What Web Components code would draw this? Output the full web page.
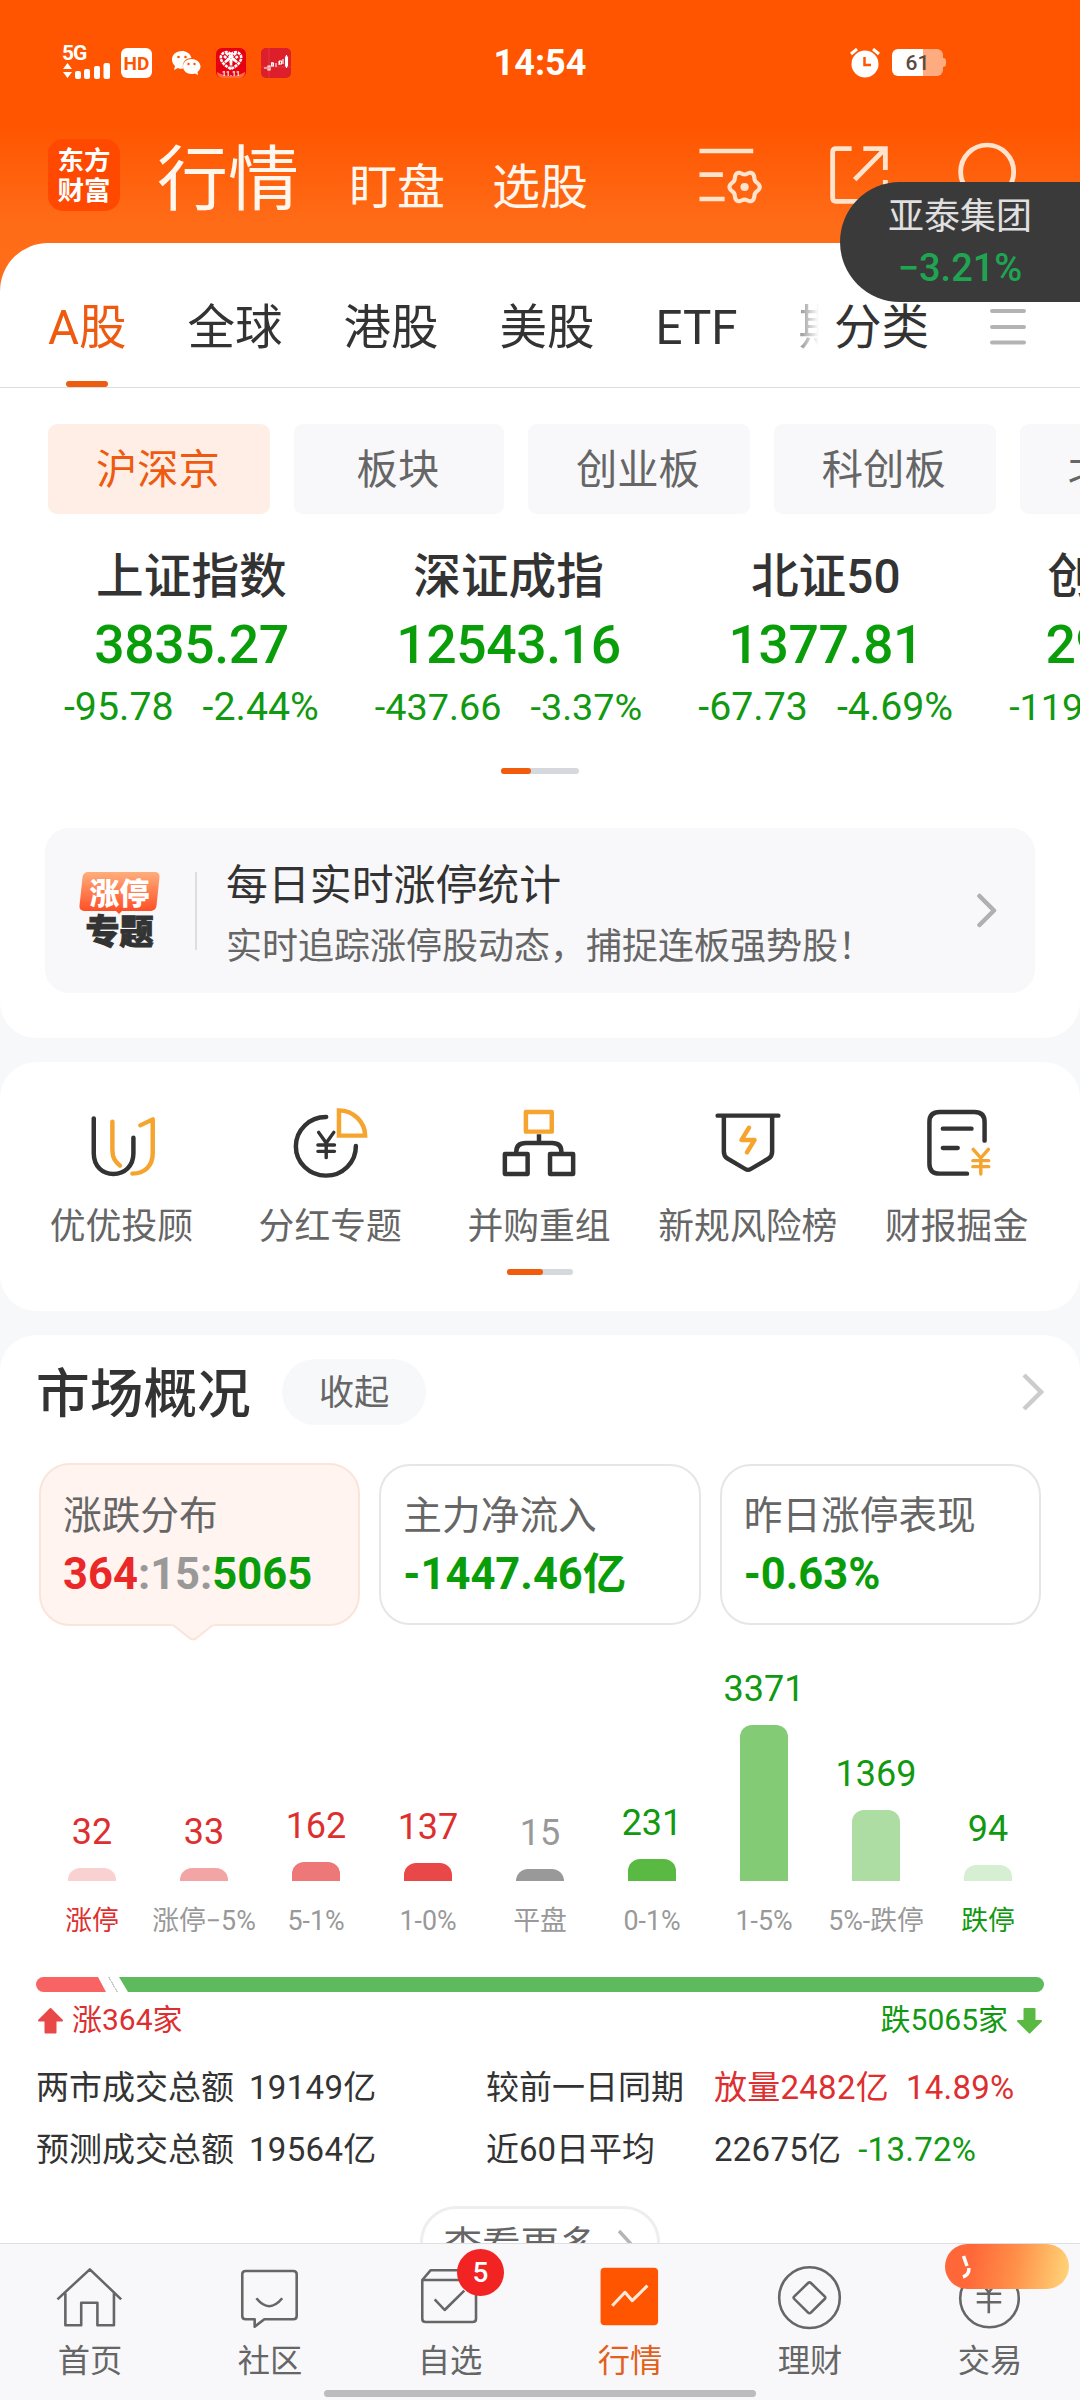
<!DOCTYPE html>
<html lang="zh-CN">
<head>
<meta charset="utf-8">
<title>行情</title>
<style>
    html, body { margin: 0; height: 2400px; }
    body {
        width: 1080px;
        overflow: hidden;
        font-family: Roboto, "Noto Sans CJK SC", sans-serif;
        color: #333;
        --up: #dd2f2f;
        --down: #119911;
        --brand: #ee5a10;
    }
</style>
</head>
<body>
<market-app></market-app>

<script>
// Base class: puts the markup returned by render() in an open shadow root
class BaseElement extends HTMLElement {
    constructor() {
        super();
        this.attachShadow({ mode: 'open' });
    }

    connectedCallback() {
        if (this._initialized) return;
        this._initialized = true;
        this.shadowRoot.innerHTML = this.render();
    }

    attr(name, fallback = '') {
        return this.getAttribute(name) || fallback;
    }
}

// Closed wavy outline with six lobes, used by the settings icon
function gearPath(cx, cy, radius, depth) {
    const points = [];
    for (let i = 0; i < 72; i++) {
        const angle = i * Math.PI / 36;
        const r = radius + depth * Math.cos(6 * angle);
        points.push(`${(cx + r * Math.cos(angle)).toFixed(1)} ${(cy + 1.08 * r * Math.sin(angle)).toFixed(1)}`);
    }
    return `M${points.join('L')}Z`;
}

const ICONS = {
    // header, 209x216
    settings: `<path d="M13 36H169M13 107H81M13 180H86"/><path stroke-width="12" d="${gearPath(144, 144, 39.500, 4.500)}"/><circle cx="144" cy="144" r="12" fill="currentColor" stroke="none"/>`,
    share: '<path d="M83 29H38Q28 29 28 39V177Q28 187 38 187H171Q181 187 181 177V123M117 29H181V93M181 29L92 122"/>',
    search: '<ellipse cx="105" cy="98" rx="77" ry="80"/><path d="M160 158L190 190"/>',
    // tools, 232x240
    youyou: '<path d="M37 40V145C37 184 62 207 94 207S152 184 152 145V98"/><path class="y" d="M91 50V135C91 160 100 171 113 182M172 61L208 43V145C208 184 184 205 149 206"/>',
    dividend: '<path d="M105 36A87 88 0 1 0 191 123"/><path class="y" stroke-linejoin="miter" d="M142 16A77 77 0 0 1 218 92H142Z"/><path stroke-width="10" d="M83 82L105 114L127 82M105 114V158M81 120H129M81 139H129"/>',
    merge: '<rect class="y" x="78" y="21" width="75" height="59"/><path d="M116 88V114M50 141Q50 114 78 114H154Q181 114 181 141" stroke-linecap="butt"/><rect x="17" y="147" width="66" height="60"/><rect x="148" y="147" width="67" height="60"/>',
    risk: '<path d="M28 32H204M46 32V140Q46 154 57 161L108 192Q116 197 124 192L175 161Q186 154 186 140V32"/><path class="y" d="M119 68L97 105H135L113 142"/>',
    report: '<path stroke-width="13" d="M196 107V51Q196 21 166 21H66Q36 21 36 51V176Q36 206 66 206H145M75 71H158M75 129H118"/><path class="y" stroke-width="10" d="M163 133L185 159L207 133M185 159V207M162 167H208M162 185H208"/>',
    // bottom bar, 209x216
    home: '<path d="M10 118L104 28L195 118M33 100V196H79V128H126V196H174V100"/>',
    chat: '<path d="M60 178H34Q24 178 24 168V43Q24 33 34 33H172Q182 33 182 43V168Q182 178 172 178H88L60 200Z"/><path d="M65 115Q102 162 140 115"/>',
    watch: '<path d="M24 60L48 31H158L180 60V176Q180 186 170 186H34Q24 186 24 176ZM24 60H180M60 118L89 150L146 92"/>',
    quotes: '<rect x="19" y="23" width="167" height="173" rx="12" fill="#ff5500" stroke="none"/><path stroke="#ffe9da" stroke-width="9" d="M53 137L90 97L111 122L155 77"/>',
    wealth: '<ellipse cx="103" cy="113" rx="88" ry="91"/><path d="M99 69Q103 65 107 69L147 109Q151 113 147 117L107 158Q103 162 99 158L59 117Q55 113 59 109Z"/>',
    trade: '<ellipse cx="103" cy="115" rx="85" ry="87"/><path d="M82 72L101 97L120 72M101 97V160M66 101H137M66 127H137"/>'
};

class StatusBar extends BaseElement {
    render() {
        return `
            <style>
            :host { display: flex; align-items: center; height: 125px; color: #fff; }
            .side { flex: none; width: 492px; display: flex; align-items: center; height: 100%; box-sizing: border-box; }
            .left { padding-left: 62px; }
            .right { padding-left: 262px; }
            .net { width: 49px; margin-right: 10px; }
            .net span { display: block; font: 700 21px/17px Roboto, sans-serif; letter-spacing: -1px; }
            .net svg, svg { display: block; }
            .time { font: 700 36px/36px Roboto, sans-serif; width: 96px; text-align: center; }
            .hd { width: 31px; height: 30px; border-radius: 6px; background: #fff; color: #ff5500; font: 700 19px/31px Roboto, sans-serif; text-align: center; margin-right: 19px; }
            .app { width: 30px; height: 30px; margin-left: 15px; }
            .battery { position: relative; width: 51px; height: 27px; margin-left: 12px; border-radius: 6px; background: linear-gradient(90deg, #fff 61%, #ffab80 61%); color: #5c4a42; font: 500 21px/28px Roboto, sans-serif; text-align: center; }
            .battery::after { content: ''; position: absolute; left: 51px; top: 9px; width: 3px; height: 9px; border-radius: 0 3px 3px 0; background: #ffab80; }
            </style>
            <div class="side left">
                <div class="net">
                    <span>5G</span>
                    <svg width="49" height="18" viewBox="0 0 49 18" fill="#fff">
                        <path d="M1 7L5.500 1L10 7ZM1 10H10L5.500 16Z"/>
                        <rect x="13" y="9" width="6" height="8" rx="2"/><rect x="22" y="7" width="6" height="10" rx="2"/>
                        <rect x="32" y="4" width="6" height="13" rx="2"/><rect x="41.500" y="1" width="6.500" height="16" rx="2"/>
                    </svg>
                </div>
                <div class="hd">HD</div>
                <svg width="30" height="26" viewBox="0 0 30 26">
                    <path fill="#fff" d="M11 1C5 1 1 5 1 9.500C1 12 2 14 4 16L3 20L7 18C9 19 11 19 12 18.500C11 12 15 8 20.500 8C19 3 15 1 11 1Z"/>
                    <path fill="#fff" d="M20.500 9C16 9 12 12 12 16.500S16 24 20.500 24C22 24 23 24 24 23.500L27 25L26.500 22C28 21 29.500 19 29.500 16.500C29.500 12 25 9 20.500 9Z"/>
                    <g fill="#ff5500"><circle cx="7.500" cy="7" r="1.300"/><circle cx="14.500" cy="7" r="1.300"/><circle cx="17.500" cy="14" r="1.200"/><circle cx="23.500" cy="14" r="1.200"/></g>
                </svg>
                <svg class="app" viewBox="0 0 30 30">
                    <rect width="30" height="30" rx="6" fill="#e60012"/>
                    <path d="M1 24Q15 32 29 24Q29 30 23 30H7Q1 30 1 24Z" fill="#ff6a3a"/>
                    <path fill="none" stroke="#fff" stroke-width="2.600" stroke-dasharray="3 .8" d="M15 21C7 17 4 12 5 8C7 3 13 3 15 7C17 3 23 3 25 8C26 12 23 17 15 21ZM10 5L22 15M20 5L8 15M15 7V19M8 8L15 14L22 8"/>
                    <text x="15" y="28" font-family="Roboto" font-size="7" font-weight="700" fill="#fff" text-anchor="middle">11.11</text>
                </svg>
                <svg class="app" viewBox="0 0 30 30">
                    <rect width="30" height="30" rx="5" fill="#dc1f2b"/>
                    <path d="M8 0V30M0 19H30" stroke="#e84850" stroke-width=".6"/>
                    <path fill="none" stroke="#fff" stroke-width="1.100" d="M3 20H6M7 18H9V22H7ZM11 14V18M10.500 15H12.500V18H10.500ZM15 15V19M18 13V17M18.500 13H20.500V16H18.500ZM22 11V16M24.500 9H26.500V18H24.500ZM25.500 7V20"/>
                </svg>
            </div>
            <div class="time">14:54</div>
            <div class="side right">
                <svg width="30" height="30" viewBox="0 0 30 30">
                    <circle cx="15" cy="16" r="13.500" fill="#fff"/>
                    <path stroke="#fff" stroke-width="3" d="M1 6L7 1M29 6L23 1"/>
                    <path fill="none" stroke="#ff5500" stroke-width="2.500" d="M14.500 9V17H21"/>
                </svg>
                <div class="battery">61</div>
            </div>
        `;
    }
}

class AppHeader extends BaseElement {
    render() {
        return `
            <style>
            :host { display: flex; align-items: center; height: 100px; padding: 0 57px 0 48px; color: #fff7ee; }
            .logo { width: 72px; height: 72px; border-radius: 15px; background: #ff4800; box-sizing: border-box; padding-top: 5px; color: #fff; font: 700 26.500px/30px "Noto Sans CJK SC", sans-serif; text-align: center; }
            .logo div { height: 30px; }
            span { font-size: 48px; line-height: 60px; padding-top: 25px; margin-left: 47px; }
            .current { font-size: 71px; line-height: 80px; padding-top: 9px; margin-left: 37px; }
            .current + span { margin-left: 50px; }
            .icons { margin-left: auto; display: flex; gap: 56px; color: #ffe3cc; }
            svg { display: block; width: 72px; height: 72px; fill: none; stroke: currentColor; stroke-width: 14; }
            </style>
            <div class="logo"><div>东方</div><div>财富</div></div>
            <span class="current">行情</span>
            <span>盯盘</span>
            <span>选股</span>
            <div class="icons">
                ${['settings', 'share', 'search'].map(name => `<svg viewBox="0 0 209 216" preserveAspectRatio="none">${ICONS[name]}</svg>`).join('')}
            </div>
        `;
    }
}

class QuoteFloat extends BaseElement {
    render() {
        return `
            <style>
            :host { display: flex; flex-direction: column; align-items: center; box-sizing: border-box; width: 240px; height: 120px; padding: 10px 0 0 0; border-radius: 60px 0 0 60px; background: #3a3a3a; color: #e0e0e0; }
            .name { font-size: 36px; line-height: 50px; }
            .rate { font-size: 38px; line-height: 50px; font-weight: 500; color: #1fa552; margin-top: 1px; }
            </style>
            <div class="name">${this.attr('name')}</div>
            <div class="rate">${this.attr('rate')}</div>
        `;
    }
}

class CategoryTabs extends BaseElement {
    render() {
        const tabs = ['A股', '全球', '港股', '美股', 'ETF', '期货'];
        return `
            <style>
            :host { display: flex; height: 144px; border-bottom: 1px solid #dcdcdc; font-size: 47.500px; line-height: 117px; }
            .list { flex: none; width: 823px; box-sizing: border-box; padding: 27px 0 0 48px; display: flex; gap: 61px; overflow: hidden; white-space: nowrap; -webkit-mask-image: linear-gradient(90deg, #000 95%, transparent 99.500%); mask-image: linear-gradient(90deg, #000 95%, transparent 99.500%); }
            .list div { flex: none; display: flex; flex-direction: column; align-items: center; }
            .active { color: var(--brand); }
            .active::after { content: ''; width: 42px; height: 6px; margin-top: -6px; border-radius: 3px; background: var(--brand); }
            .all { padding: 27px 0 0 11px; }
            svg { margin: 66px 0 0 61px; }
            </style>
            <div class="list">${tabs.map((tab, i) => `<div class="${i === 0 ? 'active' : ''}">${tab}</div>`).join('')}</div>
            <div class="all">分类</div>
            <svg width="36" height="36" viewBox="0 0 36 36" stroke="#b3b3b3" stroke-width="4" stroke-linecap="round"><path d="M2 2H34M2 18H34M2 33.500H34"/></svg>
        `;
    }
}

class BoardChip extends BaseElement {
    render() {
        return `
            <style>
            :host { flex: none; box-sizing: border-box; min-width: 210px; height: 90px; padding: 0 50px 0 48px; border-radius: 9px; background: #f8f8fb; color: #666; font-size: 41.300px; line-height: 93px; text-align: center; }
            :host([active]) { background: #ffeee6; color: var(--brand); }
            </style>
            <slot></slot>
        `;
    }
}

class IndexQuote extends BaseElement {
    render() {
        return `
            <style>
            :host { flex: none; display: flex; flex-direction: column; align-items: center; }
            .name { font-size: 47.700px; line-height: 64px; font-weight: 500; }
            .value { font-size: 53.500px; line-height: 72px; font-weight: 500; letter-spacing: -.4px; color: #0a9d0a; }
            .change { display: flex; gap: 29px; font-size: 39.300px; line-height: 52px; color: var(--down); }
            :host([compact]) .change { font-size: 37.800px; }
            </style>
            <div class="name">${this.attr('name')}</div>
            <div class="value">${this.attr('value')}</div>
            <div class="change"><span>${this.attr('change')}</span><span>${this.attr('rate')}</span></div>
        `;
    }
}

class PageDots extends BaseElement {
    render() {
        return `
            <style>
            :host { display: block; height: 6px; border-radius: 3px; margin: 0 auto; background: #d5d8dc; }
            div { width: var(--filled); height: 6px; border-radius: 3px; background: #f25a0c; }
            </style>
            <div></div>
        `;
    }
}

class PromoBanner extends BaseElement {
    render() {
        return `
            <style>
            :host { display: flex; align-items: center; height: 165px; margin: 0 45px; padding: 0 38px 0 34px; box-sizing: border-box; border-radius: 24px; background: #f8f8fa; }
            .badge { width: 81px; height: 78px; font-family: "Noto Sans CJK SC", sans-serif; font-weight: 900; text-align: center; }
            .top { position: relative; z-index: 0; height: 39px; width: 81px; color: #fff; font-size: 30px; line-height: 38px; }
            .top::before { content: ''; position: absolute; z-index: -1; inset: 0 2px; border-radius: 5px; transform: skewX(-6deg); background: linear-gradient(#ffae7c, #ff4f26); }
            .top::after { content: ''; position: absolute; left: 36px; top: 38px; border: 4px solid transparent; border-top-color: #ff4f26; }
            .bottom { font-size: 34px; line-height: 38px; -webkit-text-stroke: 1px #333; }
            .rule { width: 2px; height: 78px; margin: 0 30px 0 35px; background: #dedede; }
            .text { flex: 1; padding-top: 11px; margin-left: -1px; }
            .title { font-size: 41.900px; line-height: 62px; }
            .sub { font-size: 36px; line-height: 60px; color: #666; }
            </style>
            <div class="badge"><div class="top">涨停</div><div class="bottom">专题</div></div>
            <div class="rule"></div>
            <div class="text">
                <div class="title"><slot name="title"></slot></div>
                <div class="sub"><slot></slot></div>
            </div>
            <svg width="20" height="36" viewBox="0 0 20 36" fill="none" stroke="#b0b0b0" stroke-width="4.500" stroke-linecap="round" stroke-linejoin="round"><path d="M2.500 3L17 17.500L2.500 32"/></svg>
        `;
    }
}

class ToolItem extends BaseElement {
    render() {
        return `
            <style>
            :host { flex: none; width: 208.800px; text-align: center; font-size: 35.800px; line-height: 48px; color: #666; white-space: nowrap; }
            svg { display: block; width: 80px; height: 80px; margin: 0 auto 18px; fill: none; stroke: #333; stroke-width: 13; stroke-linecap: round; stroke-linejoin: round; }
            .y { stroke: #f5a52f; }
            </style>
            <svg viewBox="0 0 232 240" preserveAspectRatio="none">${ICONS[this.attr('icon')]}</svg>
            <slot></slot>
        `;
    }
}

class PanelCard extends BaseElement {
    render() {
        return `
            <style>
            :host { display: block; flex: none; border-radius: 36px; background: #fff; overflow: hidden; }
            </style>
            <slot></slot>
        `;
    }
}

class PanelHead extends BaseElement {
    render() {
        return `
            <style>
            :host { display: flex; align-items: center; height: 66px; padding: 24px 36px 38px 36px; }
            .title { font-size: 53.700px; line-height: 66px; font-weight: 500; padding-top: 5px; }
            .fold { height: 66px; margin-left: 31px; padding: 0 37px; border-radius: 33px; background: #f6f8fa; color: #666; font-size: 35.300px; line-height: 69px; }
            svg { margin-left: auto; }
            </style>
            <div class="title"><slot></slot></div>
            <div class="fold">收起</div>
            <svg width="22" height="38" viewBox="0 0 22 38" fill="none" stroke="#ccc" stroke-width="4.500"><path d="M2 2L19 19L2 36"/></svg>
        `;
    }
}

class StatCard extends BaseElement {
    render() {
        return `
            <style>
            :host { position: relative; flex: 1; box-sizing: border-box; height: 161px; margin: 1px 0; padding: 26px 0 0 22px; border: 2px solid #e6e6e6; border-radius: 31px; white-space: nowrap; }
            :host([active]) { height: 163px; margin: 0; padding-top: 27px; background: #fff4f0; border-color: #fbe4da; }
            .label { font-size: 38.700px; line-height: 48px; color: #666; margin-bottom: 5px; }
            .value { font-size: 43.500px; line-height: 60px; font-weight: 700; color: #0a9d0a; }
            svg { display: none; position: absolute; left: 130px; top: 159px; }
            :host([active]) svg { display: block; }
            </style>
            <div class="label">${this.attr('label')}</div>
            <div class="value"><slot></slot></div>
            <svg width="44" height="17" viewBox="0 0 44 17"><path d="M0 0H44L41 2L25 14.500Q22 16 19 14.500L3 2Z" fill="#fff4f0"/><path d="M2 1L19 14.500Q22 16 25 14.500L42 1" fill="none" stroke="#fbe4da" stroke-width="2"/></svg>
        `;
    }
}

class DistChart extends BaseElement {
    render() {
        const bars = [
            { label: '涨停', value: 32, height: 13, color: '#f9d1d1', text: 'var(--up)', edge: true },
            { label: '涨停−5%', value: 33, height: 13, color: '#f3a5a5', text: 'var(--up)' },
            { label: '5-1%', value: 162, height: 19, color: '#ee7777', text: 'var(--up)' },
            { label: '1-0%', value: 137, height: 18, color: '#e84848', text: 'var(--up)' },
            { label: '平盘', value: 15, height: 12, color: '#999', text: '#999' },
            { label: '0-1%', value: 231, height: 22, color: '#5ab942', text: 'var(--down)' },
            { label: '1-5%', value: 3371, height: 156, color: '#84cb76', text: 'var(--down)' },
            { label: '5%-跌停', value: 1369, height: 71, color: '#addda2', text: 'var(--down)' },
            { label: '跌停', value: 94, height: 16, color: '#d6efd2', text: 'var(--down)', edge: true }
        ];
        return `
            <style>
            :host { display: grid; grid-template-columns: repeat(9, 112px); margin: 0 36px; }
            .col { display: flex; flex-direction: column; align-items: center; justify-content: flex-end; height: 311px; white-space: nowrap; }
            .value { font-size: 36px; line-height: 36px; margin-bottom: 18px; }
            .bar { width: 48px; border-radius: 12px 12px 0 0; }
            .label { position: relative; top: 1px; margin-top: 22px; font-size: 26.800px; line-height: 34px; color: #999; }
            </style>
            ${bars.map(bar => `
                <div class="col">
                    <div class="value" style="color: ${bar.text}">${bar.value}</div>
                    <div class="bar" style="height: ${bar.height}px; background: ${bar.color}"></div>
                    <div class="label" ${bar.edge ? `style="color: ${bar.text}"` : ''}>${bar.label}</div>
                </div>`).join('')}
        `;
    }
}

class RatioBar extends BaseElement {
    render() {
        return `
            <style>
            :host { display: block; margin: 40px 36px 0; }
            .bar { display: flex; height: 15px; border-radius: 7.500px; overflow: hidden; }
            .rise { width: 70px; background: #f86464; clip-path: polygon(0 0, 62px 0, 100% 100%, 0 100%); }
            .fall { flex: 1; margin-left: -1px; background: #5dba5d; clip-path: polygon(0 0, 100% 0, 100% 100%, 9px 100%); }
            .split { width: 14px; background: linear-gradient(60deg, #fff 47%, #ccc 47%, #ccc 53%, #fff 53%); }
            .legend { display: flex; justify-content: space-between; margin-top: 8px; font-size: 30px; line-height: 40px; }
            .legend div { display: flex; align-items: center; gap: 8px; padding: 0 1px; }
            .up { color: var(--up); }
            .down { color: var(--down); }
            </style>
            <div class="bar"><div class="rise"></div><div class="split"></div><div class="fall"></div></div>
            <div class="legend">
                <div class="up"><svg width="27" height="27" viewBox="0 0 27 27"><path fill="#e84848" stroke="#e84848" stroke-width="2" stroke-linejoin="round" d="M13.500 2L25 13.500H18.500V25.500H8.500V13.500H2Z"/></svg>涨364家</div>
                <div class="down">跌5065家<svg width="27" height="27" viewBox="0 0 27 27"><path fill="#5ab942" stroke="#5ab942" stroke-width="2" stroke-linejoin="round" d="M13.500 25.500L25 14H18.500V2H8.500V14H2Z"/></svg></div>
            </div>
        `;
    }
}

class TurnoverRow extends BaseElement {
    render() {
        return `
            <style>
            :host { display: grid; grid-template-columns: 450px 228px 1fr; padding-left: 36px; font-size: 33px; line-height: 62px; white-space: nowrap; }
            div { display: flex; }
            .total { gap: 15px; }
            .total span + span { letter-spacing: .3px; }
            .delta { gap: 17px; letter-spacing: .25px; }
            </style>
            <div class="total"><span>${this.attr('label')}</span><span>${this.attr('value')}</span></div>
            <div>${this.attr('versus')}</div>
            <div class="delta"><slot></slot></div>
        `;
    }
}

class MoreButton extends BaseElement {
    render() {
        return `
            <style>
            :host { display: flex; align-items: center; justify-content: center; gap: 20px; box-sizing: border-box; width: 240px; height: 79px; margin: 25px auto 0; padding-right: 4px; border: 3px solid #eee; border-radius: 36px; color: #666; font-size: 38.500px; line-height: 50px; }
            svg { margin-top: -4px; }
            </style>
            <slot></slot>
            <svg width="15" height="30" viewBox="0 0 15 30" fill="none" stroke="#b5b5b5" stroke-width="3.500"><path d="M1 2L13 15L1 28"/></svg>
        `;
    }
}

class NavItem extends BaseElement {
    render() {
        return `
            <style>
            :host { position: relative; flex: 1; padding-top: 16px; text-align: center; color: #666; font-size: 32.300px; line-height: 44px; }
            :host([active]) { color: #e2601c; }
            svg { display: block; width: 72px; height: 72px; margin: 0 auto 7px; fill: none; stroke: #666; stroke-width: 7.500; stroke-linejoin: round; }
            .badge { position: absolute; left: 97px; top: 5px; width: 47px; height: 47px; border-radius: 50%; background: #f12323; color: #fff; font-weight: 500; font-size: 28px; line-height: 48px; }
            .promo { position: absolute; left: 45px; top: 0; width: 124px; height: 45px; border-radius: 23px; background: linear-gradient(100deg, #ff6638 20%, #ff8e48 55%, #ffd478 98%); }
            .promo svg { width: 10px; height: 24px; margin: 11px 0 0 16px; stroke: #fff; stroke-width: 3.500; }
            </style>
            <svg viewBox="0 0 209 216" preserveAspectRatio="none">${ICONS[this.attr('icon')]}</svg>
            <slot></slot>
            ${this.attr('badge') ? `<div class="badge">${this.attr('badge')}</div>` : ''}
            ${this.hasAttribute('promo') ? '<div class="promo"><svg viewBox="0 0 10 24"><path d="M2.500 1L6 11M8 13Q8 20 2 22"/></svg></div>' : ''}
        `;
    }
}

class BottomNav extends BaseElement {
    render() {
        return `
            <style>
            :host { position: relative; display: flex; flex: none; height: 156px; border-top: 1px solid #dedfe2; background: #f8f8fa; }
            .handle { position: absolute; left: 324px; bottom: 3px; width: 432px; height: 7px; border-radius: 4px; background: #bcbcbc; }
            </style>
            <slot></slot>
            <div class="handle"></div>
        `;
    }
}

class MarketApp extends BaseElement {
    render() {
        return `
            <style>
            :host { position: relative; display: flex; flex-direction: column; height: 2400px; background: #f6f8fa; }
            .hero { flex: none; height: 293px; margin-bottom: -50px; background: linear-gradient(#ff5500 125px, #ff6c18 225px, #ff6e1b); }
            quote-float { position: absolute; right: 0; top: 182px; }
            main { flex: 1; min-height: 0; overflow: hidden; display: flex; flex-direction: column; gap: 24px; }
            .first { border-radius: 48px 48px 36px 36px; padding-bottom: 45px; }
            .chips { display: flex; gap: 24px; padding: 36px 0 0 48px; }
            .indexes { display: flex; gap: 56px; padding: 31px 0 35px 64px; }
            .tools { display: flex; padding: 43px 0 18px 17px; }
            .second { padding-bottom: 36px; }
            .third { border-radius: 36px 36px 0 0; }
            .stats { display: flex; gap: 19px; margin: 0 39px; height: 163px; }
            .turnover { margin-top: 17px; }
            .up { color: var(--up); }
            .down { color: var(--down); }
            .red { color: #ea2828; }
            .flat { color: #999; }
            </style>
            <div class="hero">
                <status-bar></status-bar>
                <app-header></app-header>
            </div>
            <main>
                <panel-card class="first">
                    <category-tabs></category-tabs>
                    <div class="chips">
                        <board-chip active>沪深京</board-chip>
                        <board-chip>板块</board-chip>
                        <board-chip>创业板</board-chip>
                        <board-chip>科创板</board-chip>
                        <board-chip>北交所</board-chip>
                    </div>
                    <div class="indexes">
                        <index-quote name="上证指数" value="3835.27" change="-95.78" rate="-2.44%"></index-quote>
                        <index-quote compact name="深证成指" value="12543.16" change="-437.66" rate="-3.37%"></index-quote>
                        <index-quote name="北证50" value="1377.81" change="-67.73" rate="-4.69%"></index-quote>
                        <index-quote compact name="创业板指" value="2920.08" change="-119.28" rate="-3.92%"></index-quote>
                    </div>
                    <page-dots style="width: 78px; --filled: 30px; margin-bottom: 54px"></page-dots>
                    <promo-banner><span slot="title">每日实时涨停统计</span>实时追踪涨停股动态，捕捉连板强势股！</promo-banner>
                </panel-card>
                <panel-card class="second">
                    <div class="tools">
                        <tool-item icon="youyou">优优投顾</tool-item>
                        <tool-item icon="dividend">分红专题</tool-item>
                        <tool-item icon="merge">并购重组</tool-item>
                        <tool-item icon="risk">新规风险榜</tool-item>
                        <tool-item icon="report">财报掘金</tool-item>
                    </div>
                    <page-dots style="width: 66px; --filled: 36px"></page-dots>
                </panel-card>
                <panel-card class="third">
                    <panel-head>市场概况</panel-head>
                    <div class="stats">
                        <stat-card active label="涨跌分布"><span class="red">364</span><span class="flat">:15:</span>5065</stat-card>
                        <stat-card label="主力净流入">-1447.46亿</stat-card>
                        <stat-card label="昨日涨停表现">-0.63%</stat-card>
                    </div>
                    <dist-chart></dist-chart>
                    <ratio-bar></ratio-bar>
                    <div class="turnover">
                        <turnover-row label="两市成交总额" value="19149亿" versus="较前一日同期"><span class="up">放量2482亿</span><span class="up">14.89%</span></turnover-row>
                        <turnover-row label="预测成交总额" value="19564亿" versus="近60日平均"><span>22675亿</span><span class="down">-13.72%</span></turnover-row>
                    </div>
                    <more-button>查看更多</more-button>
                </panel-card>
            </main>
            <bottom-nav>
                <nav-item icon="home">首页</nav-item>
                <nav-item icon="chat">社区</nav-item>
                <nav-item icon="watch" badge="5">自选</nav-item>
                <nav-item icon="quotes" active>行情</nav-item>
                <nav-item icon="wealth">理财</nav-item>
                <nav-item icon="trade" promo>交易</nav-item>
            </bottom-nav>
            <quote-float name="亚泰集团" rate="−3.21%"></quote-float>
        `;
    }
}

customElements.define('status-bar', StatusBar);
customElements.define('app-header', AppHeader);
customElements.define('quote-float', QuoteFloat);
customElements.define('category-tabs', CategoryTabs);
customElements.define('board-chip', BoardChip);
customElements.define('index-quote', IndexQuote);
customElements.define('page-dots', PageDots);
customElements.define('promo-banner', PromoBanner);
customElements.define('tool-item', ToolItem);
customElements.define('panel-card', PanelCard);
customElements.define('panel-head', PanelHead);
customElements.define('stat-card', StatCard);
customElements.define('dist-chart', DistChart);
customElements.define('ratio-bar', RatioBar);
customElements.define('turnover-row', TurnoverRow);
customElements.define('more-button', MoreButton);
customElements.define('nav-item', NavItem);
customElements.define('bottom-nav', BottomNav);
customElements.define('market-app', MarketApp);
</script>
</body>
</html>
